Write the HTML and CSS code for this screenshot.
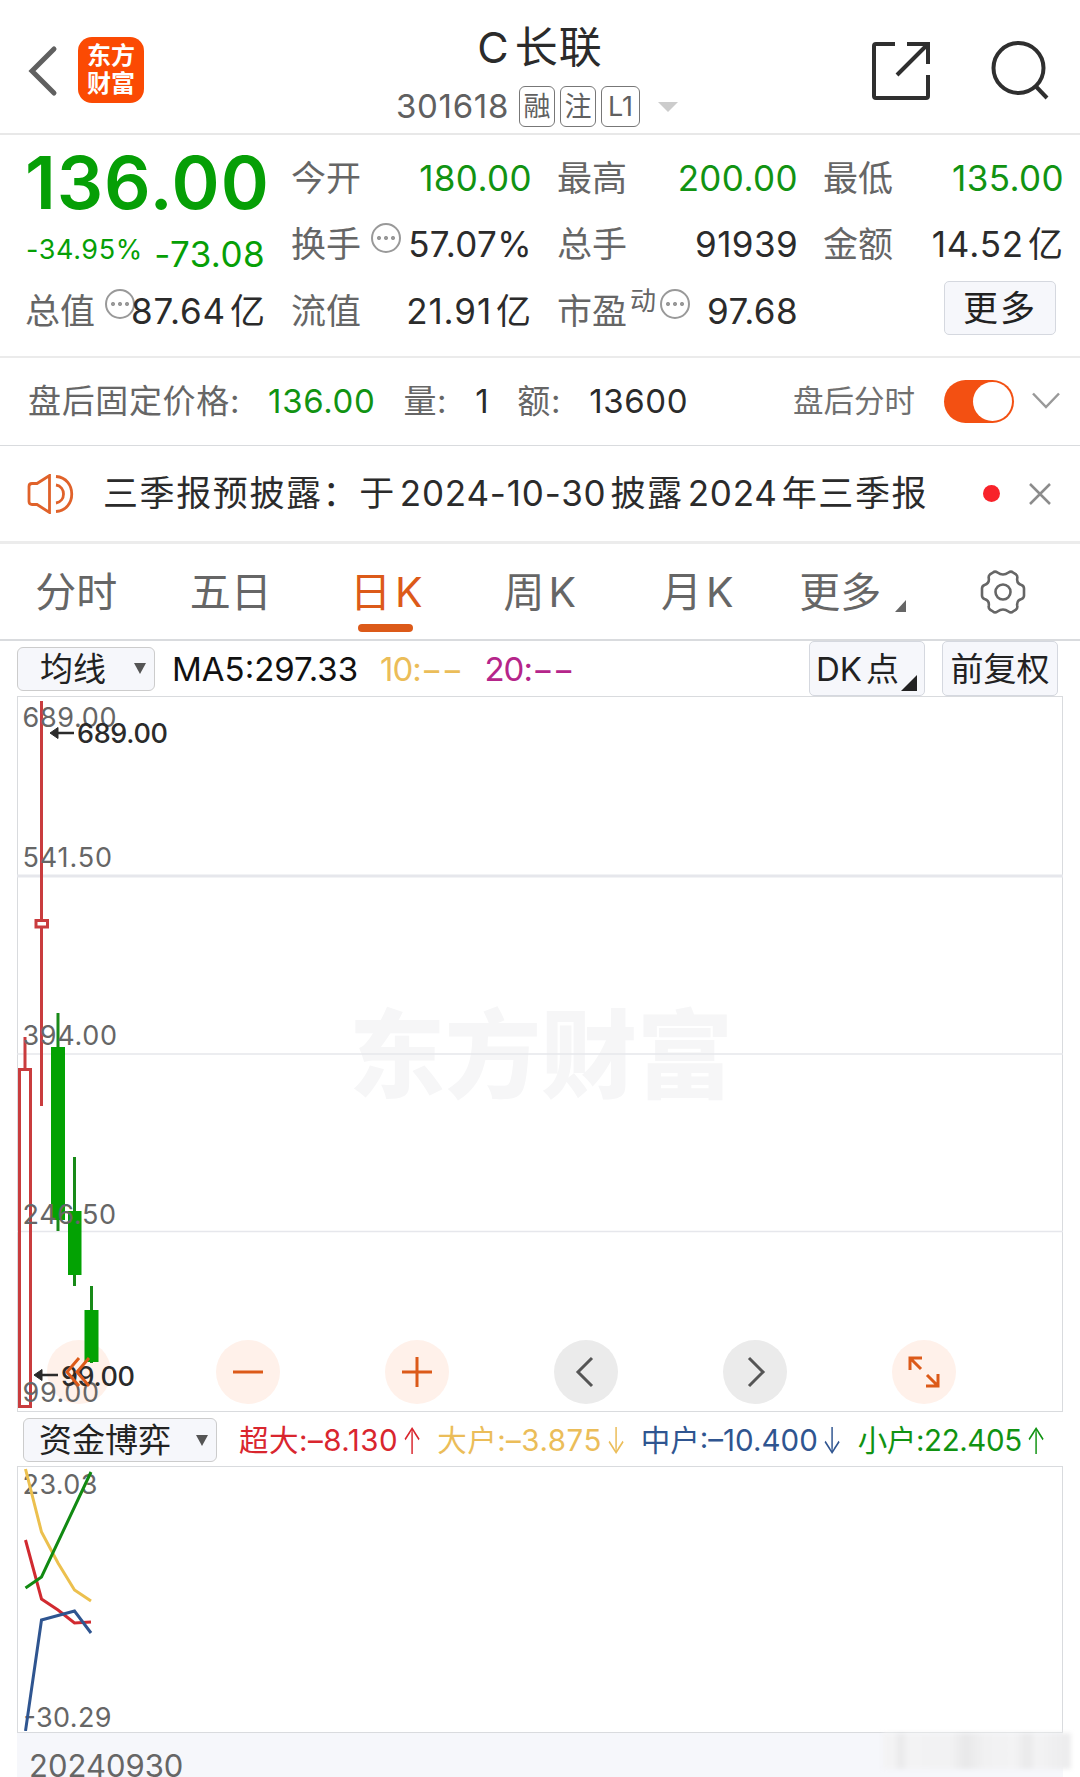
FILE: index.html
```html
<!DOCTYPE html>
<html lang="zh-CN">
<head>
  <meta charset="UTF-8" />
  <meta name="viewport" content="width=device-width, initial-scale=1.0"/>
  <title>C长联 301618</title>
  <link rel="stylesheet" href="styles.css">
</head>
<body>
  <header class="header">
    <div class="header-left">
      <svg class="back" width="30" height="52" viewBox="0 0 30 52"><path d="M26 4 L4 26 L26 48" /></svg>
      <div class="logo"><span>东方</span><span>财富</span></div>
    </div>
    <div class="header-title">
      <h1>C<span>长联</span></h1>
      <div class="code-row">
        <span class="code">301618</span>
        <span class="tag">融</span>
        <span class="tag">注</span>
        <span class="tag tag-l1">L1</span>
        <i class="caret"></i>
      </div>
    </div>
    <div class="header-right">
      <svg width="60" height="60" viewBox="0 0 60 60"><path d="M24 3 H5 Q3 3 3 5 V55 Q3 57 5 57 H55 Q57 57 57 55 V34 M36 3 H57 V23 M57 3 L26 34" /></svg>
      <svg width="60" height="60" viewBox="0 0 60 60"><circle cx="27.5" cy="27" r="25" /><path d="M44.500 45 L56 57" /></svg>
    </div>
  </header>

  <section class="quote">
    <div class="price-box">
      <div class="price">136.00</div>
      <div class="change"><span class="pct">-34.95%</span><span class="diff">-73.08</span></div>
    </div>
    <div class="stat"><span class="label">今开</span><span class="value green">180.00</span></div>
    <div class="stat"><span class="label">最高</span><span class="value green">200.00</span></div>
    <div class="stat"><span class="label">最低</span><span class="value green">135.00</span></div>

    <div class="stat"><span class="label">换手</span><i class="dots"></i><span class="value">57.07%</span></div>
    <div class="stat"><span class="label">总手</span><span class="value">91939</span></div>
    <div class="stat"><span class="label">金额</span><span class="value wide">14.52<b>亿</b></span></div>

    <div class="stat tight"><span class="label">总值</span><i class="dots"></i><span class="value wide">87.64<b>亿</b></span></div>
    <div class="stat"><span class="label">流值</span><span class="value wide">21.91<b>亿</b></span></div>
    <div class="stat pe"><span class="label">市盈</span><span class="sup">动</span><i class="dots"></i><span class="value">97.68</span></div>
    <div class="stat"><button class="more-btn">更多</button></div>
  </section>

  <section class="after-hours">
    <span class="ah-label">盘后固定价格:</span>
    <span class="ah-price">136.00</span>
    <span class="ah-label">量:</span>
    <span class="ah-vol">1</span>
    <span class="ah-label">额:</span>
    <span class="ah-amount">13600</span>
    <span class="ah-switch-label">盘后分时</span>
    <span class="switch"></span>
    <svg class="chev" width="28" height="18" viewBox="0 0 28 18"><path d="M1 1.500 L14 15 L27 1.500" /></svg>
  </section>

  <section class="news">
    <svg class="speaker" width="48" height="40" viewBox="0 0 48 40">
      <path d="M2 12.500 Q2 9.500 5 9.500 H10 L22.500 1.500 V38.500 L10 30.500 H5 Q2 30.500 2 27.500 Z" />
      <path d="M29 2.500 C50 4 50 36 29 37.500 M29 11 C39 12.500 39 27.500 29 29" />
    </svg>
    <span class="news-text">三季报预披露：于<em>2024-10-30</em>披露<em>2024</em>年三季报</span>
    <i class="red-dot"></i>
    <svg class="close" width="22" height="22" viewBox="0 0 22 22"><path d="M1 1 L21 21 M21 1 L1 21" /></svg>
  </section>

  <nav class="tabs">
    <span class="tab">分时</span>
    <span class="tab">五日</span>
    <span class="tab active">日<em>K</em></span>
    <span class="tab">周<em>K</em></span>
    <span class="tab month">月<em>K</em></span>
    <span class="tab more">更多<i class="corner"></i></span>
    <span class="tab">
      <svg class="gear" width="46" height="46" viewBox="-23 -23 46 46">
        <path d="M-10 -19.500 Q-8 -21.300 -5.500 -19.500 Q0 -15.500 5.500 -19.500 Q8 -21.300 10 -19.500 L13 -17.600 Q14.800 -16 14.200 -13.500 Q13.500 -8.500 18.500 -7 Q21 -6 21 -3.500 V3.500 Q21 6 18.500 7 Q13.500 8.500 14.200 13.500 Q14.800 16 13 17.600 L10 19.500 Q8 21.300 5.500 19.500 Q0 15.500 -5.500 19.500 Q-8 21.300 -10 19.500 L-13 17.600 Q-14.800 16 -14.200 13.500 Q-13.500 8.500 -18.500 7 Q-21 6 -21 3.500 V-3.500 Q-21 -6 -18.500 -7 Q-13.500 -8.500 -14.200 -13.500 Q-14.800 -16 -13 -17.600 Z" />
        <circle r="7.500" />
      </svg>
    </span>
  </nav>

  <div class="ma-bar">
    <button class="select-btn ma-select">均线<i class="down"></i></button>
    <span class="ma5">MA5:297.33</span>
    <span class="ma10">10:−−</span>
    <span class="ma20">20:−−</span>
    <button class="tool-btn dk">DK<span>点</span><i class="corner"></i></button>
    <button class="tool-btn">前复权</button>
  </div>

  <div class="chart k-chart">
    <div class="controls">
      <span class="ctrl"><svg width="30" height="32" viewBox="0 0 30 32"><path d="M15 2 L3 16 L15 30 M25 2 L13 16 L25 30" /></svg></span>
      <span class="ctrl"><svg width="32" height="32" viewBox="0 0 32 32"><path d="M1 16 H31" /></svg></span>
      <span class="ctrl"><svg width="32" height="32" viewBox="0 0 32 32"><path d="M1 16 H31 M16 1 V31" /></svg></span>
      <span class="ctrl gray"><svg width="32" height="32" viewBox="0 0 32 32"><path d="M22 2 L8 16 L22 30" /></svg></span>
      <span class="ctrl gray"><svg width="32" height="32" viewBox="0 0 32 32"><path d="M10 2 L24 16 L10 30" /></svg></span>
      <span class="ctrl"><svg width="32" height="32" viewBox="0 0 32 32"><path d="M2 14 V2 H14 M2 2 L13 13 M30 18 V30 H18 M30 30 L19 19" /></svg></span>
    </div>
    <svg class="plot" width="1046" height="715" viewBox="17 696 1046 715">
      <text class="watermark" x="349" y="1090" textLength="384">东方财富</text>
      <g class="grid">
        <path d="M17 876 H1063" stroke-width="3" />
        <path d="M17 1054 H1063 M17 1231.500 H1063" stroke-width="1.500" />
      </g>
      <g class="up">
        <path d="M25 1037 V1069 M41.500 701 V920 M41.500 927 V1106" />
        <rect x="19.500" y="1069.500" width="11" height="337" />
        <rect x="36" y="920.500" width="11.500" height="6.500" />
      </g>
      <g class="down-k">
        <path d="M58 1013 V1231 M74.500 1157 V1286 M91.500 1286 V1363" />
        <rect x="51" y="1047" width="14" height="173" />
        <rect x="68" y="1211" width="13.500" height="64" />
        <rect x="84.500" y="1310" width="14" height="52" />
      </g>
      <g class="axis">
        <text x="22.500" y="726.500" textLength="94">689.00</text>
        <text x="22.500" y="866.500" textLength="89.500">541.50</text>
        <text x="22.500" y="1044.500" textLength="94.500">394.00</text>
        <text x="22.500" y="1223.500" textLength="93.500">246.50</text>
        <text x="22.500" y="1401.500" textLength="76.500">99.00</text>
      </g>
      <g class="marker">
        <path d="M56 733 H74 M40 1375 H58" />
        <path class="head" d="M50 733 L58 727.500 V738.500 Z M34 1375 L42 1369.500 V1380.500 Z" />
        <text x="77" y="742.500" textLength="91">689.00</text>
        <text x="61" y="1385.500" textLength="74">99.00</text>
      </g>
    </svg>
  </div>

  <div class="flow-bar">
    <button class="select-btn flow-select">资金博弈<i class="down"></i></button>
    <span class="flow red">超大:–8.130<i>↑</i></span>
    <span class="flow yellow">大户:–3.875<i>↓</i></span>
    <span class="flow blue">中户:–10.400<i>↓</i></span>
    <span class="flow green">小户:22.405<i>↑</i></span>
  </div>

  <div class="chart flow-chart">
    <svg class="plot" width="1046" height="265" viewBox="17 1466 1046 265">
      <g class="axis">
        <text x="22.500" y="1494" textLength="75">23.03</text>
        <text x="23.500" y="1727" textLength="88">-30.29</text>
      </g>
      <g class="lines">
        <polyline stroke="#ecc04e" points="25.500,1469 41.500,1532 58,1563 74.500,1590 91,1601" />
        <polyline stroke="#d12a30" points="25.500,1540 41.500,1599 58,1610 74.500,1623 91,1622" />
        <polyline stroke="#118a12" points="25.500,1588 41.500,1577 91,1472" />
        <polyline stroke="#2f5590" points="25.500,1731 41.500,1620 58,1615.500 74.500,1611 91,1633" />
      </g>
    </svg>
  </div>

  <footer class="date-bar">
    <span>20240930</span>
    <i class="smudge"></i>
  </footer>
</body>
</html>
```

FILE: styles.css
```css
* {
  box-sizing: border-box;
}
body {
  margin: 0;
  width: 1080px;
  height: 1777px;
  overflow: hidden;
  background: #fff;
  color: #2b2b2b;
  font-family: Inter, "Noto Sans CJK SC", sans-serif;
  font-weight: 400;
  white-space: nowrap;
}
svg {
  display: block;
  fill: none;
}
i, em, b {
  font-style: normal;
  font-weight: inherit;
}
button {
  font: inherit;
  color: #222;
  padding: 0;
  background: #f6f7fb;
  border: 1px solid #d5d8df;
  border-radius: 5px;
}
.green {
  color: #119312;
}

/* header */
.header {
  display: grid;
  grid-template-columns: 1fr 300px 1fr;
  height: 135px;
  border-bottom: 2px solid #e8e8e8;
}
.header-left {
  display: flex;
  align-items: flex-start;
  gap: 20px;
  padding: 37px 0 0 28px;
}
.back {
  margin-top: 8px;
  stroke: #606060;
  stroke-width: 5;
  stroke-linecap: round;
}
.logo {
  display: flex;
  flex-direction: column;
  justify-content: center;
  align-items: center;
  width: 66px;
  height: 66px;
  background: #fb4a03;
  border-radius: 14px;
  color: #fff;
  font-size: 24px;
  font-weight: 700;
  line-height: 28px;
}
.header-title {
  display: flex;
  flex-direction: column;
  align-items: center;
}
.header-title h1 {
  margin: 24px 0 0;
  font-size: 43px;
  line-height: 46px;
  font-weight: 400;
}
.header-title h1 span {
  margin-left: 6px;
  letter-spacing: 1px;
}
.code-row {
  display: flex;
  align-items: center;
  gap: 5px;
  height: 41px;
  margin: 16px 0 0 -6px;
  color: #606060;
}
.code {
  font-size: 33px;
  line-height: 40px;
  margin: -2px 5px 0 0;
  letter-spacing: 0.700px;
}
.tag {
  width: 36px;
  height: 41px;
  border: 1px solid #777;
  border-radius: 6px;
  font-size: 27px;
  line-height: 39px;
  text-align: center;
}
.tag-l1 {
  width: 39px;
}
.caret {
  margin-left: 13px;
  border: 10px solid transparent;
  border-top-color: #ccc;
  border-bottom: 0;
}
.header-right {
  display: flex;
  justify-content: flex-end;
  gap: 60px;
  padding: 41px 29px 0 0;
  stroke: #2f2f2f;
  stroke-width: 4;
}

/* quote */
.quote {
  display: grid;
  grid-template-columns: repeat(4, 239px);
  grid-template-rows: repeat(3, 66.5px);
  column-gap: 27px;
  height: 223px;
  padding: 10px 0 0 26px;
  border-bottom: 2px solid #ebebeb;
}
.price-box {
  grid-row: span 2;
  color: #069f06;
}
.price {
  margin: 7px 0 0 -1px;
  font-size: 73px;
  line-height: 62px;
  font-weight: 600;
  letter-spacing: 0.900px;
}
.change {
  display: flex;
  justify-content: space-between;
  margin-top: 20px;
  line-height: 32px;
}
.pct {
  font-size: 27px;
  letter-spacing: 0.600px;
}
.diff {
  font-size: 35px;
  padding-top: 4px;
  letter-spacing: 0.400px;
}
.stat {
  display: flex;
  align-items: center;
  font-size: 35px;
  line-height: 40px;
}
.label {
  margin: -1px 0 0 -1px;
  color: #666;
}
.value {
  margin: -1px -1px 0 auto;
  letter-spacing: 0.400px;
}
.wide {
  letter-spacing: 0.900px;
}
.value b {
  margin-left: 4px;
}
.dots {
  flex: none;
  width: 30px;
  height: 30px;
  margin: -14px 0 0 10px;
  border: 2px solid #999;
  border-radius: 50%;
  background:
    radial-gradient(circle at 6px 13px, #999 1.800px, transparent 2.300px),
    radial-gradient(circle at 13px 13px, #999 1.800px, transparent 2.300px),
    radial-gradient(circle at 20px 13px, #999 1.800px, transparent 2.300px);
}
.tight .dots {
  margin-right: -10px;
}
.sup {
  color: #666;
  font-size: 26px;
  margin: -20px 0 0 3px;
}
.pe .dots {
  margin-left: 4px;
}
.more-btn {
  width: 112px;
  height: 54px;
  margin: -6px 7px 0 auto;
  letter-spacing: 2px;
}

/* after hours */
.after-hours {
  display: flex;
  align-items: center;
  height: 88px;
  padding: 0 20px 1px 28px;
  border-bottom: 1px solid #d9dbde;
  font-size: 33px;
  line-height: 40px;
  letter-spacing: 0.650px;
}
.ah-label {
  color: #666;
}
.ah-price {
  color: #119312;
  margin: 0 28px;
}
.ah-vol {
  margin: 0 28px;
}
.ah-amount {
  margin-left: 28px;
}
.ah-switch-label {
  margin-left: auto;
  color: #707070;
  font-size: 30.500px;
  letter-spacing: 0;
}
.switch {
  display: flex;
  justify-content: flex-end;
  width: 70px;
  height: 43px;
  margin-left: 29px;
  padding: 2px;
  border-radius: 22px;
  background: #f35012;
}
.switch::after {
  content: "";
  width: 39px;
  height: 39px;
  border-radius: 50%;
  background: #fff;
}
.chev {
  margin-left: 18px;
  stroke: #999;
  stroke-width: 2.500;
}

/* news */
.news {
  display: flex;
  align-items: center;
  height: 98px;
  padding: 0 29px 0 27px;
  border-bottom: 3px solid #ececec;
  font-size: 35px;
  line-height: 40px;
}
.speaker {
  stroke: #e0622a;
  stroke-width: 2.800;
}
.news-text {
  margin: -2px 0 0 28px;
  letter-spacing: 1.600px;
}
.news-text em {
  margin: 0 4px;
  letter-spacing: 0.800px;
}
.red-dot {
  width: 17px;
  height: 17px;
  margin-left: auto;
  border-radius: 50%;
  background: #f8222a;
}
.close {
  margin-left: 29px;
  stroke: #8c8c8c;
  stroke-width: 2.500;
}

/* tabs */
.tabs {
  display: grid;
  grid-template-columns: repeat(7, 154.5px);
  height: 97px;
  border-bottom: 2px solid #d9dbde;
  color: #666;
  font-size: 41px;
  line-height: 44px;
}
.tab {
  display: flex;
  justify-content: center;
  align-items: center;
  position: relative;
  padding-right: 2px;
}
.tab em {
  margin-left: 4px;
}
.active {
  padding-right: 0;
  color: #dc5a19;
}
.active::after {
  content: "";
  position: absolute;
  bottom: 7px;
  left: 49px;
  width: 55px;
  height: 8px;
  border-radius: 4px;
  background: #dc5a19;
}
.month {
  padding: 0 0 0 4px;
}
.corner {
  border-left: 11px solid transparent;
  border-bottom: 12px solid #666;
}
.more {
  padding: 0 0 0 6px;
}
.more .corner {
  margin: 28px 0 0 14px;
}
.gear {
  stroke: #666;
  stroke-width: 2.600;
}

/* moving averages */
.ma-bar {
  display: flex;
  align-items: center;
  height: 55px;
  padding: 0 22px 0 17px;
  font-size: 33px;
  line-height: 40px;
}
.select-btn {
  display: flex;
  align-items: center;
  justify-content: space-between;
  height: 44px;
  border-color: #ccc;
  border-radius: 6px;
}
.down {
  border: 6.500px solid transparent;
  border-top: 11px solid #555;
  border-bottom: 0;
}
.ma-select {
  width: 138px;
  padding: 0 8px 0 22px;
}
.ma5 {
  margin-left: 17px;
  color: #111;
}
.ma10 {
  margin-left: 22px;
  color: #ebbd59;
  letter-spacing: -1px;
}
.ma20 {
  margin-left: 22px;
  color: #b5258a;
  letter-spacing: -1px;
}
.tool-btn {
  width: 116px;
  height: 55px;
  margin-left: 17px;
}
.dk {
  display: flex;
  align-items: center;
  margin-left: auto;
  padding-left: 6px;
}
.dk span {
  margin-left: 4px;
}
.dk .corner {
  align-self: flex-end;
  margin: 0 0 4px 2px;
  border-left-width: 16px;
  border-bottom: 16px solid #222;
}

/* charts */
.chart {
  position: relative;
  width: 1046px;
  margin-left: 17px;
  border: 1px solid #d9dbde;
}
.k-chart {
  height: 716px;
}
.flow-chart {
  height: 267px;
}
.plot {
  position: relative;
  margin: -1px;
}
.controls {
  position: absolute;
  left: 29px;
  bottom: 7px;
  display: flex;
  gap: 105px;
}
.ctrl {
  display: flex;
  align-items: center;
  justify-content: center;
  width: 64px;
  height: 64px;
  border-radius: 50%;
  background: #fff1ea;
  stroke: #dc5a19;
  stroke-width: 3;
}
.ctrl svg {
  position: relative;
  z-index: 2;
}
.gray {
  background: #ebebeb;
  stroke: #555;
}
.watermark {
  fill: #f6f6f7;
  font-size: 96px;
  font-weight: 900;
}
.grid {
  stroke: #e6e7ec;
}
.up {
  stroke: #c93c3e;
  stroke-width: 3;
}
.down-k {
  stroke: #188a18;
  stroke-width: 3;
}
.down-k rect {
  fill: #03a203;
  stroke: none;
}
.axis {
  fill: #666;
  font-size: 27px;
}
.marker {
  font-size: 27px;
  font-weight: 500;
  fill: #2b2b2b;
}
.marker path {
  stroke: #2b2b2b;
  stroke-width: 2.500;
}
.marker .head {
  stroke-width: 1;
}
.lines {
  stroke-width: 3;
}

/* money flow */
.flow-bar {
  display: flex;
  align-items: center;
  height: 54px;
  padding: 2px 0 0 23px;
  font-size: 29.500px;
  line-height: 40px;
}
.flow-select {
  width: 194px;
  padding: 0 8px 0 15px;
  font-size: 33px;
}
.flow {
  margin-left: 15px;
  letter-spacing: 0.500px;
}
.flow i {
  display: inline-block;
  width: 22px;
  margin-left: 2px;
  font-weight: 300;
  transform: scale(0.8, 1.25);
}
.flow-select + .flow {
  margin-left: 22px;
}
.flow.red {
  color: #d9262e;
}
.flow.yellow {
  color: #ebbd59;
}
.flow.blue {
  color: #2f5590;
  letter-spacing: 0;
}
.flow.green {
  margin-left: 16px;
  letter-spacing: -0.400px;
}

.date-bar {
  position: relative;
  width: 1046px;
  height: 45px;
  margin-left: 17px;
  padding: 13px 0 0 12px;
  background: #f6f7fb;
  color: #666;
  font-size: 31px;
  line-height: 40px;
}
.smudge {
  position: absolute;
  top: 0;
  right: -8px;
  width: 188px;
  height: 36px;
  filter: blur(2px);
  background: linear-gradient(90deg, #f3f3f4 0, #f3f3f4 6%, #e9e9ea 9%, #f3f3f4 14%, #f2f2f3 36%, #e8e8e9 44%, #f1f1f2 54%, #f3f3f4 70%, #e9e9ea 77%, #f3f3f4 82%, #ededee 96%);
}
```
